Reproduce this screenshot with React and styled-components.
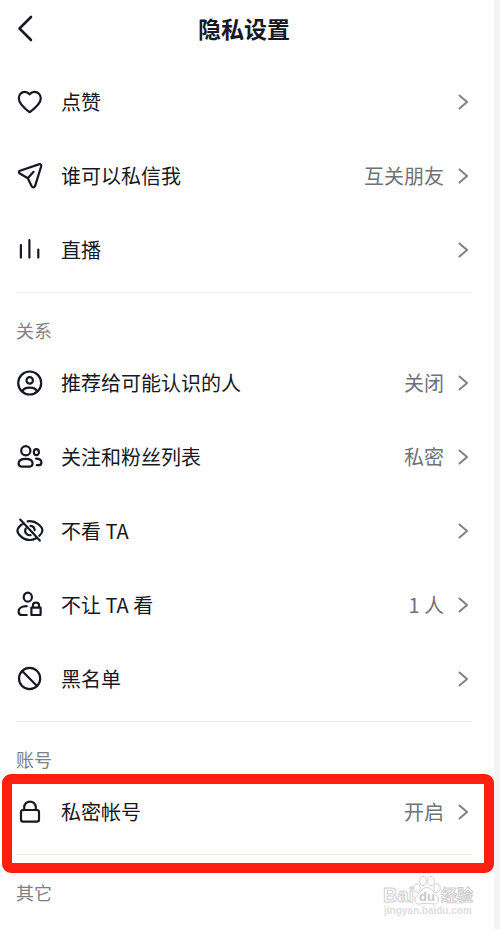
import React from 'react';
import styled, { createGlobalStyle } from 'styled-components';

const GlobalStyle = createGlobalStyle`
  * { box-sizing: border-box; }
  body {
    margin: 0;
    background: #f4f4f5;
    font-family: "Noto Sans CJK SC", "Noto Sans", sans-serif;
    color: #161823;
  }
`;

const Page = styled.main`
  position: relative;
  min-height: 100vh;
  margin-right: 6px;
  background: #fff;
  overflow: hidden;
`;

const Header = styled.header`
  display: grid;
  grid-template-columns: 40px 1fr 40px;
  align-items: center;
  height: 65px;
  padding: 0 12px 10px 6px;
`;

const BackButton = styled.button`
  display: flex;
  justify-content: center;
  padding: 0;
  border: 0;
  background: none;
  color: inherit;
`;

const Title = styled.h1`
  margin: 0;
  text-align: center;
  font-size: 23px;
  line-height: 32px;
  font-weight: 700;
`;

const Section = styled.section`
  position: relative;
`;

const SectionTitle = styled.h2`
  margin: 0;
  padding: 25px 16px 4px;
  font-size: 18px;
  line-height: 24px;
  font-weight: 400;
  color: #7f8086;
`;

const List = styled.ul`
  list-style: none;
  margin: 0 22px 0 16px;
  padding: 0 0 5px;
  border-bottom: 1px solid #ededee;
`;

const Row = styled.button`
  display: flex;
  align-items: center;
  width: 100%;
  height: 74px;
  padding: 0;
  border: 0;
  background: none;
  font: inherit;
  font-size: 20px;
  line-height: 28px;
  color: inherit;
  text-align: left;
`;

const RowLabel = styled.span`
  flex: 1;
  margin-left: 17px;
`;

const Value = styled.span`
  margin-right: 12px;
  color: #717277;
`;

const Icon = styled.svg`
  flex: none;
  display: block;
  fill: none;
  stroke: currentColor;
  stroke-width: ${(p) => p.$weight || 2};
  stroke-linecap: round;
  stroke-linejoin: round;
`;

const Arrow = styled(Icon)`
  margin-right: 2px;
  color: #808186;
`;

const Highlight = styled.div`
  position: absolute;
  inset: 52px 0 -18px 2px;
  border: 10px solid #ff1e10;
  border-radius: 9px;
  pointer-events: none;
`;

const Watermark = styled.svg`
  position: absolute;
  right: 20px;
  bottom: 10px;
  font-family: "Liberation Sans", "Noto Sans CJK SC", sans-serif;
  font-weight: 700;
`;

const icons = {
  heart: <path d="M13.6 24.2C10.6 22 2.8 16.4 2.8 10.3C2.8 6.6 5.4 3.8 8.6 3.8C10.8 3.8 12.5 4.9 13.6 6.3C14.7 4.9 16.4 3.8 18.6 3.8C22 3.8 24.8 6.6 24.8 10.3C24.8 16.4 16.6 22 13.6 24.2Z" />,
  send: <path d="M4 8.8L22.8 2.4C24.7 1.8 25.7 2.9 25.1 4.7L19.2 23.6C18.5 25.8 16.6 25.9 15.6 24L11.8 16.3L3.9 11.5C2.5 10.7 2.6 9.3 4 8.8ZM11.8 16.3L17.6 9.8" />,
  live: <path d="M4.9 9V21.6M13.4 4V21.6M22.3 13.6V21.6" />,
  person: (
    <>
      <circle cx="13.7" cy="14" r="11.5" />
      <circle cx="13.7" cy="11.4" r="3.2" />
      <path d="M6.4 22.3C7.3 19.7 10.3 18.6 13.7 18.6S20.1 19.7 21 22.3" />
    </>
  ),
  people: (
    <>
      <circle cx="9.8" cy="7.8" r="4.6" />
      <path d="M9.6 15.8C5 15.8 2.6 17.8 2.6 20.6C2.6 22.6 3.7 23.6 5.6 23.6H13.6C15.5 23.6 16.6 22.6 16.6 20.6C16.6 17.8 14.2 15.8 9.6 15.8Z" />
      <ellipse cx="20.4" cy="9.2" rx="2.5" ry="3" />
      <path d="M20 15.6C23.4 15.6 25.4 17 25.4 19.4C25.4 21.3 24.4 22.2 22.6 22.2H20.8" />
    </>
  ),
  eyeOff: (
    <>
      <path d="M7.8 6.2C3.6 8.3 1.4 11.8 1.4 13.4C1.4 16.6 6.4 23 13.8 23C16 23 18 22.5 19.8 21.6M11.6 4.4C20.6 3 26.4 10.4 26.4 13.4C26.4 15 25.3 16.9 23.4 18.8M9.7 11.6C8 15.2 10.6 18.7 14.6 18.2M14.5 8.9C16.9 9.2 18.5 10.8 18.7 13.2M4.2 2.6L23.8 23.6" />
    </>
  ),
  personLock: (
    <>
      <ellipse cx="11.8" cy="6.2" rx="4.1" ry="4.5" />
      <path d="M10.7 15.2C5.6 15.2 2.6 17.4 2.6 20.4C2.6 23 4 24 6.2 24H10.7" />
      <path d="M15.4 16.6H24.6V24H15.4ZM17 16.4V14C17 10.7 23 10.7 23 14V16.4" />
    </>
  ),
  block: (
    <>
      <circle cx="13.6" cy="13.5" r="10.6" />
      <path d="M6.2 6L21 21" />
    </>
  ),
  lock: (
    <>
      <rect x="5" y="12" width="18" height="11.7" rx="2.2" />
      <path d="M8.2 11.7V9.4C8.2 1.7 19.8 1.7 19.8 9.4V11.7" />
    </>
  ),
};

const sections = [
  {
    rows: [
      { icon: 'heart', label: '点赞' },
      { icon: 'send', label: '谁可以私信我', value: '互关朋友' },
      { icon: 'live', label: '直播' },
    ],
  },
  {
    title: '关系',
    rows: [
      { icon: 'person', label: '推荐给可能认识的人', value: '关闭' },
      { icon: 'people', label: '关注和粉丝列表', value: '私密' },
      { icon: 'eyeOff', label: '不看 TA' },
      { icon: 'personLock', label: '不让 TA 看', value: '1 人' },
      { icon: 'block', label: '黑名单' },
    ],
  },
  {
    title: '账号',
    highlighted: true,
    rows: [{ icon: 'lock', label: '私密帐号', value: '开启' }],
  },
];

function SettingRow({ icon, label, value }) {
  return (
    <li>
      <Row type="button">
        <Icon width="28" height="28" viewBox="0 0 28 28" $weight={2.2} aria-hidden="true">
          {icons[icon]}
        </Icon>
        <RowLabel>{label}</RowLabel>
        {value && <Value>{value}</Value>}
        <Arrow width="14" height="18" viewBox="0 0 14 18" aria-hidden="true">
          <path d="M3.5 2.5L11 9L3.5 15.5" />
        </Arrow>
      </Row>
    </li>
  );
}

function BaiduMark() {
  return (
    <Watermark width="94" height="44" viewBox="0 0 94 44" aria-hidden="true">
      <g fill="#fff" stroke="#d0d0d1" strokeWidth="1">
        <text x="3" y="27" fontSize="20">Bai</text>
        <text x="61" y="26" fontSize="16">经验</text>
        <ellipse cx="37" cy="13" rx="3.2" ry="4.2" />
        <ellipse cx="43" cy="6" rx="3.3" ry="4.6" />
        <ellipse cx="51" cy="6" rx="3.3" ry="4.6" />
        <ellipse cx="57" cy="13" rx="3.2" ry="4.2" />
        <path d="M47 12.5C42 12.5 41 17 37.5 20C32.5 24.5 35.5 30 40 29C44 28 49 28 53 29C58.5 30 60.5 24.5 56.5 20C53 17 52 12.5 47 12.5Z" />
      </g>
      <text x="39" y="26" fontSize="13" fill="#c9c9ca">du</text>
      <text x="4" y="39" fontSize="10" fill="#dededf">jingyan.baidu.com</text>
    </Watermark>
  );
}

export default function App() {
  return (
    <>
      <GlobalStyle />
      <Page>
        <Header>
          <BackButton type="button" aria-label="返回">
            <Icon width="24" height="28" viewBox="0 0 24 28" $weight={2.6} aria-hidden="true">
              <path d="M17 3L5.5 14.5L17 26" />
            </Icon>
          </BackButton>
          <Title>隐私设置</Title>
        </Header>
        {sections.map((section) => (
          <Section key={section.title || 'top'}>
            {section.title && <SectionTitle>{section.title}</SectionTitle>}
            <List>
              {section.rows.map((row) => (
                <SettingRow key={row.label} {...row} />
              ))}
            </List>
            {section.highlighted && <Highlight />}
          </Section>
        ))}
        <SectionTitle>其它</SectionTitle>
        <BaiduMark />
      </Page>
    </>
  );
}
